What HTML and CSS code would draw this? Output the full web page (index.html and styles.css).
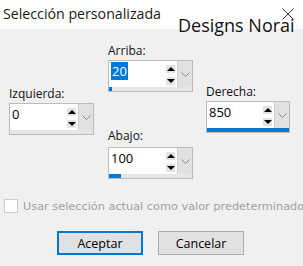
FILE: index.html
```html
<!DOCTYPE html>
<html lang="es">
<head>
  <meta charset="UTF-8" />
  <title>Selección personalizada</title>
  <link rel="stylesheet" href="styles.css">
</head>
<body>
  <div class="dialog">
    <div class="titlebar">
      <span class="title">Selección personalizada</span>
      <svg class="close" width="12" height="12" viewBox="0 0 12 12">
        <path d="M0.5 0.5 L11.5 11.5 M11.5 0.5 L0.5 11.5" stroke="#333" stroke-width="1" fill="none"/>
      </svg>
      <span class="watermark">Designs Norai</span>
    </div>

    <div class="fields">
      <div class="col col-left">
        <div class="field">
          <div class="field-label">Izquierda:</div>
          <div class="spin">
            <div class="spin-main">
              <div class="spin-value">0</div>
              <div class="spin-btns"><span class="btn-up"></span><span class="btn-down"></span></div>
              <div class="spin-drop"><svg width="9" height="6" viewBox="0 0 9 6"><path d="M0.5 0.5 L4.5 4.5 L8.5 0.5" stroke="#888" fill="none"/></svg></div>
            </div>
            <div class="spin-bar"><div class="spin-fill" style="width: 0%"></div></div>
          </div>
        </div>
      </div>

      <div class="col col-center">
        <div class="field">
          <div class="field-label">Arriba:</div>
          <div class="spin">
            <div class="spin-main">
              <div class="spin-value"><span class="selected">20</span></div>
              <div class="spin-btns"><span class="btn-up"></span><span class="btn-down"></span></div>
              <div class="spin-drop"><svg width="9" height="6" viewBox="0 0 9 6"><path d="M0.5 0.5 L4.5 4.5 L8.5 0.5" stroke="#888" fill="none"/></svg></div>
            </div>
            <div class="spin-bar"><div class="spin-fill" style="width: 4%"></div></div>
          </div>
        </div>
        <div class="field field-bottom">
          <div class="field-label">Abajo:</div>
          <div class="spin">
            <div class="spin-main">
              <div class="spin-value">100</div>
              <div class="spin-btns"><span class="btn-up"></span><span class="btn-down"></span></div>
              <div class="spin-drop"><svg width="9" height="6" viewBox="0 0 9 6"><path d="M0.5 0.5 L4.5 4.5 L8.5 0.5" stroke="#888" fill="none"/></svg></div>
            </div>
            <div class="spin-bar"><div class="spin-fill" style="width: 14%"></div></div>
          </div>
        </div>
      </div>

      <div class="col col-right">
        <div class="field">
          <div class="field-label">Derecha:</div>
          <div class="spin">
            <div class="spin-main">
              <div class="spin-value">850</div>
              <div class="spin-btns"><span class="btn-up"></span><span class="btn-down"></span></div>
              <div class="spin-drop"><svg width="9" height="6" viewBox="0 0 9 6"><path d="M0.5 0.5 L4.5 4.5 L8.5 0.5" stroke="#888" fill="none"/></svg></div>
            </div>
            <div class="spin-bar"><div class="spin-fill" style="width: 100%"></div></div>
          </div>
        </div>
      </div>
    </div>

    <label class="default-check">
      <span class="checkbox"></span>
      <span class="check-text">Usar selección actual como valor predeterminado</span>
    </label>

    <div class="buttons">
      <button class="btn btn-default">Aceptar</button>
      <button class="btn">Cancelar</button>
    </div>
  </div>
</body>
</html>
```

FILE: styles.css
```css
body {
  margin: 0;
  padding: 0;
  background-color: #f0f0f0;
  font-family: "Open Sans", "Noto Sans", sans-serif;
  color: #000;
}
.dialog {
  width: 303px;
  height: 266px;
  overflow: hidden;
}
.titlebar {
  position: relative;
  height: 29px;
  background-color: #fff;
}
.title {
  display: block;
  padding: 4px 0 0 3px;
  font-size: 14.2px;
  line-height: 20px;
  color: #1a1a1a;
}
.close {
  position: absolute;
  left: 282px;
  top: 8px;
}
.watermark {
  position: absolute;
  left: 178px;
  top: 12px;
  font-size: 18px;
  line-height: 26px;
  color: #111;
}
.fields {
  display: flex;
  padding-left: 9px;
}
.col {
  display: flex;
  flex-direction: column;
}
.col-left {
  width: 85px;
  padding-top: 58px;
}
.col-center {
  width: 85px;
  margin-left: 14px;
  padding-top: 15px;
}
.col-right {
  width: 84px;
  margin-left: 13px;
  padding-top: 56px;
}
.field-bottom {
  margin-top: 37px;
}
.field-bottom .field-label {
  margin-bottom: 4px;
}
.field-label {
  font-size: 12px;
  line-height: 14px;
  margin-bottom: 2px;
  color: #111;
}
.spin {
  border: 1px solid #bcbcbc;
  background-color: #fff;
}
.spin-main {
  display: flex;
  height: 26px;
}
.spin-value {
  flex: 1;
  padding: 2px 0 0 2px;
  font-size: 13px;
  line-height: 16px;
}
.selected {
  background-color: #0078d7;
  color: #fff;
  padding: 0 1px;
}
.spin-btns {
  width: 10px;
  display: flex;
  flex-direction: column;
  gap: 4px;
  padding-top: 4px;
  margin-right: 1px;
}
.btn-up,
.btn-down {
  position: relative;
  display: block;
  width: 9px;
  height: 8px;
  background-color: #e3e3e3;
}
.btn-up::after,
.btn-down::after {
  content: "";
  position: absolute;
  left: 0.5px;
  border-left: 4px solid transparent;
  border-right: 4px solid transparent;
}
.btn-up::after {
  top: 2px;
  border-bottom: 4px solid #000;
}
.btn-down::after {
  top: 2px;
  border-top: 4px solid #000;
}
.spin-drop {
  width: 14px;
  background-color: #e1e1e1;
  border-left: 1px solid #d0d0d0;
  display: flex;
  align-items: center;
  justify-content: center;
  padding-top: 2px;
}
.spin-bar {
  height: 4px;
  background-color: #e6e6e6;
}
.spin-fill {
  height: 100%;
  background-color: #0078d7;
}
.default-check {
  display: flex;
  align-items: center;
  gap: 5px;
  margin-top: 20px;
  padding-left: 4px;
  white-space: nowrap;
}
.checkbox {
  width: 12px;
  height: 12px;
  border: 1px solid #cccccc;
  background-color: #fff;
  flex-shrink: 0;
}
.check-text {
  font-family: "DejaVu Sans", Verdana, sans-serif;
  font-size: 11.3px;
  color: #a0a0a0;
}
.buttons {
  display: flex;
  gap: 15px;
  margin-top: 18px;
  padding-left: 57px;
}
.btn {
  width: 86px;
  height: 24px;
  background-color: #e1e1e1;
  border: 1px solid #adadad;
  font-family: "Open Sans", "Noto Sans", sans-serif;
  font-size: 12.5px;
  color: #000;
  padding: 0;
}
.btn-default {
  border: 2px solid #0078d7;
}
```
